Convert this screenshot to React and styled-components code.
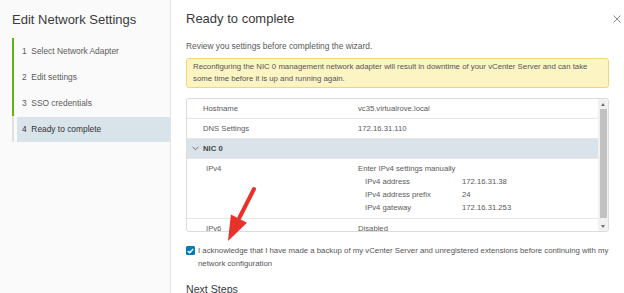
import React from 'react';
import styled, { createGlobalStyle } from 'styled-components';

const GlobalStyle = createGlobalStyle`
  html, body {
    margin: 0;
    padding: 0;
    background: #fff;
  }
  body {
    font-family: 'Liberation Sans', Arial, sans-serif;
    color: #565656;
  }
`;

const steps = [
  { id: 1, label: 'Select Network Adapter', done: true },
  { id: 2, label: 'Edit settings', done: true },
  { id: 3, label: 'SSO credentials', done: true },
  { id: 4, label: 'Ready to complete', active: true },
];

const ipv4 = [
  ['IPv4 address', '172.16.31.38'],
  ['IPv4 address prefix', '24'],
  ['IPv4 gateway', '172.16.31.253'],
];

const App = () => {
  return (
    <>
      <GlobalStyle />
      <Dialog>
        <Sidebar>
          <SideTitle>Edit Network Settings</SideTitle>
          <StepList>
            {steps.map((s) => (
              <Step key={s.id} done={s.done}>
                <StepLabel active={s.active}>
                  {s.id}&nbsp; {s.label}
                </StepLabel>
              </Step>
            ))}
          </StepList>
        </Sidebar>

        <Main>
          <Header>
            <Title>Ready to complete</Title>
            <CloseButton aria-label='close'>
              <svg width='8' height='8' viewBox='0 0 8 8'>
                <path d='M0.5 0.5 L7.5 7.5 M7.5 0.5 L0.5 7.5' stroke='#8a8a8a' strokeWidth='1' />
              </svg>
            </CloseButton>
          </Header>
          <Intro>Review you settings before completing the wizard.</Intro>
          <Alert>
            Reconfiguring the NIC 0 management network adapter will result in downtime of your
            vCenter Server and can take some time before it is up and running again.
          </Alert>

          <TableBox>
            <TableBody>
              <Row>
                <Label>Hostname</Label>
                <Value>vc35.virtualrove.local</Value>
              </Row>
              <Row>
                <Label>DNS Settings</Label>
                <Value>172.16.31.110</Value>
              </Row>
              <GroupRow>
                <Chevron>
                  <svg width='7' height='5' viewBox='0 0 7 5'>
                    <path d='M0.5 0.8 L3.5 3.8 L6.5 0.8' fill='none' stroke='#666' strokeWidth='0.9' />
                  </svg>
                </Chevron>
                NIC 0
              </GroupRow>
              <Row tall>
                <Label indent>IPv4</Label>
                <Value>
                  <Line>Enter IPv4 settings manually</Line>
                  <SubGrid>
                    {ipv4.map(([k, v]) => (
                      <React.Fragment key={k}>
                        <Line>{k}</Line>
                        <Line>{v}</Line>
                      </React.Fragment>
                    ))}
                  </SubGrid>
                </Value>
              </Row>
              <Row tall>
                <Label indent>IPv6</Label>
                <Value>Disabled</Value>
              </Row>
            </TableBody>
            <ScrollBar>
              <ScrollArrow />
              <Thumb />
              <ScrollArrow down />
            </ScrollBar>
          </TableBox>

          <Ack>
            <Check>
              <svg width='7' height='6' viewBox='0 0 7 6'>
                <path d='M0.8 3 L2.7 4.8 L6.2 1' fill='none' stroke='#fff' strokeWidth='1.4' />
              </svg>
            </Check>
            <AckText>
              I acknowledge that I have made a backup of my vCenter Server and unregistered
              extensions before continuing with my network configuration
            </AckText>
          </Ack>

          <NextTitle>Next Steps</NextTitle>
        </Main>

        <Annotation width='624' height='293' viewBox='0 0 624 293'>
          <line x1='254' y1='189' x2='239.5' y2='217.5' stroke='#e8312b' strokeWidth='4' strokeLinecap='round' />
          <polygon points='228,241 247,222.7 230.9,214.5' fill='#e8312b' />
        </Annotation>
      </Dialog>
    </>
  );
};

export default App;

const Dialog = styled.div`
  position: relative;
  display: flex;
  width: 624px;
  height: 293px;
  overflow: hidden;
  background: #fff;
`;

const Sidebar = styled.aside`
  flex: none;
  width: 170px;
  background: #fafafa;
  border-right: 1px solid #e4e4e4;
`;

const SideTitle = styled.div`
  height: 38px;
  display: flex;
  align-items: center;
  padding-left: 12px;
  font-size: 13px;
  color: #3a3a3a;
`;

const StepList = styled.ul`
  list-style: none;
  margin: 0 0 0 12px;
  padding: 0;
`;

const Step = styled.li`
  display: flex;
  align-items: center;
  height: 26px;
  border-left: 2px solid ${(p) => (p.done ? '#60b515' : '#e0e0e0')};
`;

const StepLabel = styled.div`
  flex: 1;
  margin-left: 3px;
  height: 25px;
  display: flex;
  align-items: center;
  padding-left: 5px;
  font-size: 8.4px;
  color: ${(p) => (p.active ? '#333' : '#5a5a5a')};
  background: ${(p) => (p.active ? '#d9e4ea' : 'transparent')};
`;

const Main = styled.main`
  flex: 1;
  min-width: 0;
  padding: 0 15px;
`;

const Header = styled.div`
  height: 36px;
  display: flex;
  align-items: center;
  justify-content: space-between;
  margin-right: -12px;
`;

const Title = styled.h3`
  margin: 0;
  font-size: 13px;
  font-weight: 400;
  color: #3a3a3a;
`;

const CloseButton = styled.button`
  width: 8px;
  height: 8px;
  padding: 0;
  margin-top: 2px;
  border: none;
  background: transparent;
  display: flex;
`;

const Intro = styled.p`
  margin: 4px 0 0;
  line-height: 12px;
  font-size: 8.4px;
  color: #5a5a5a;
`;

const Alert = styled.div`
  margin-top: 6px;
  padding: 2px 6px;
  border: 1px solid #f3d66c;
  border-radius: 3px;
  background: #fdf4c3;
  font-size: 7.8px;
  line-height: 12px;
  color: #555;
`;

const TableBox = styled.div`
  margin-top: 10px;
  height: 134px;
  box-sizing: border-box;
  display: flex;
  border: 1px solid #dcdcdc;
  border-radius: 3px;
  overflow: hidden;
`;

const TableBody = styled.div`
  flex: 1;
  min-width: 0;
  overflow: hidden;
  font-size: 7.7px;
  color: #5a5a5a;
`;

const Row = styled.div`
  display: flex;
  align-items: ${(p) => (p.tall ? 'flex-start' : 'center')};
  min-height: 19px;
  padding: ${(p) => (p.tall ? '3px 0 4px 16px' : '0 0 0 16px')};
  border-bottom: 1px solid #e6e6e6;
`;

const Label = styled.div`
  width: ${(p) => (p.indent ? '152px' : '155px')};
  padding-left: ${(p) => (p.indent ? '3px' : '0')};
  flex: none;
  line-height: 13px;
`;

const Value = styled.div`
  flex: 1;
  line-height: 13px;
`;

const Line = styled.div`
  line-height: 13px;
  white-space: nowrap;
`;

const SubGrid = styled.div`
  display: grid;
  grid-template-columns: 97px auto;
  padding-left: 7px;
`;

const GroupRow = styled.div`
  display: flex;
  align-items: center;
  height: 19px;
  padding-left: 3px;
  background: #dae3e9;
  font-weight: 700;
  color: #444;
  border-bottom: 1px solid #e6e6e6;
`;

const Chevron = styled.span`
  width: 10px;
  margin-right: 3px;
  display: flex;
  justify-content: center;
`;

const ScrollBar = styled.div`
  flex: none;
  width: 10px;
  display: flex;
  flex-direction: column;
  align-items: center;
  background: #f1f1f1;
`;

const ScrollArrow = styled.div`
  flex: none;
  height: 10px;
  width: 10px;
  display: flex;
  align-items: center;
  justify-content: center;
  &::before {
    content: '';
    border-left: 2.5px solid transparent;
    border-right: 2.5px solid transparent;
    ${(p) => (p.down ? 'border-top: 3px solid #6f6f6f;' : 'border-bottom: 3px solid #6f6f6f;')}
  }
`;

const Thumb = styled.div`
  flex: 1;
  width: 7px;
  margin-bottom: 3px;
  background: #c1c1c1;
`;

const Ack = styled.label`
  display: flex;
  align-items: flex-start;
  margin-top: 12px;
`;

const Check = styled.span`
  flex: none;
  width: 9px;
  height: 9px;
  margin-top: 2px;
  margin-right: 3px;
  border-radius: 1.5px;
  background: #0079b8;
  display: flex;
  align-items: center;
  justify-content: center;
`;

const AckText = styled.span`
  font-size: 7.8px;
  line-height: 13px;
  color: #555;
`;

const NextTitle = styled.h4`
  margin: 12px 0 0;
  font-size: 10.6px;
  line-height: 14px;
  font-weight: 400;
  color: #3a3a3a;
`;

const Annotation = styled.svg`
  position: absolute;
  left: 0;
  top: 0;
  pointer-events: none;
`;
